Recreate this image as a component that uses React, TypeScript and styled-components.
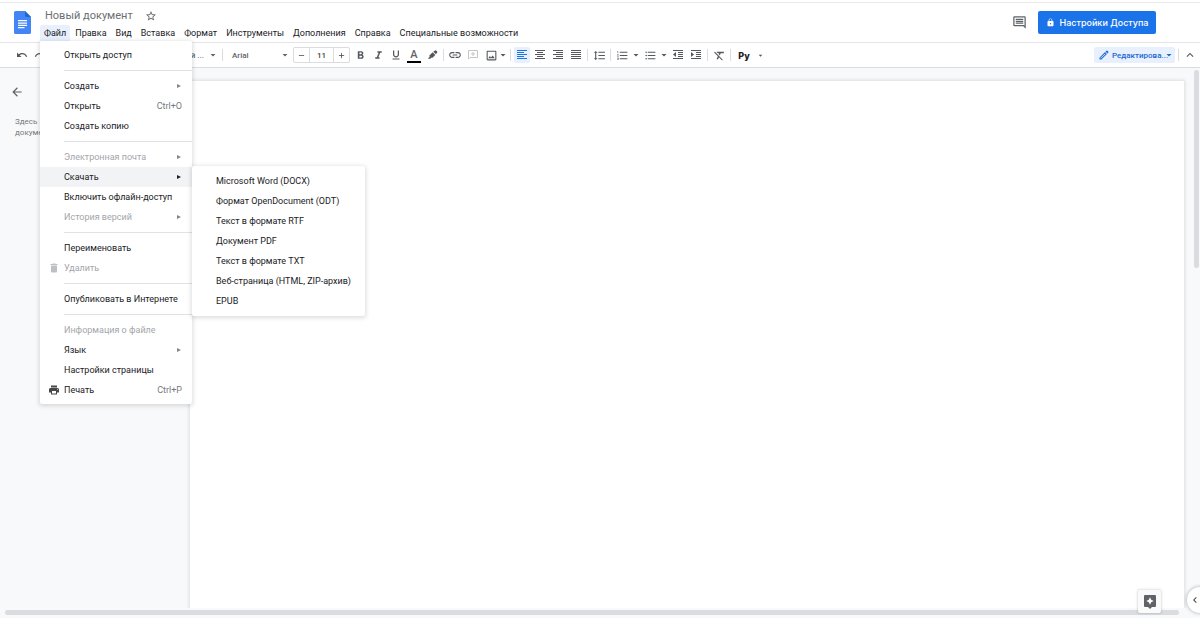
import React from "react";
import styled, { createGlobalStyle, css } from "styled-components";
import {
  MdUndo, MdRedo, MdPrint, MdSpellcheck, MdFormatPaint, MdFormatBold, MdFormatItalic, MdFormatUnderlined,
  MdInsertLink, MdOutlineImage, MdFormatLineSpacing, MdFormatListNumbered,
  MdFormatListBulleted, MdFormatClear,
  MdArrowDropDown, MdKeyboardArrowUp, MdKeyboardArrowLeft, MdArrowBack, MdDelete,
  MdStarBorder, MdOutlineComment, MdLock, MdOutlineEdit, MdAdd, MdRemove,
} from "react-icons/md";

const GlobalStyle = createGlobalStyle`
  * { box-sizing: border-box; }
  html, body, #root { height: 100%; }
  body { margin: 0; font-family: Roboto, "Liberation Sans", sans-serif; font-size: 9px; color: #202124; background: #fff; overflow: hidden; }
  button, input, select { font: inherit; color: inherit; margin: 0; padding: 0; border: 0; background: none; }
  button { cursor: pointer; }
  ul { list-style: none; margin: 0; padding: 0; }
  svg { display: block; flex: none; }
`;

const Shell = styled.div`
  display: flex;
  flex-direction: column;
  height: 100vh;
  padding-top: 2px;
`;

const Header = styled.header`
  display: flex;
  align-items: flex-start;
  height: 41px;
  padding: 8px 44px 0 14px;
  border-top: 1px solid #e8eaed;
  border-bottom: 1px solid #e3e5e8;
`;

const Logo = styled.a`
  display: block;
  width: 17px;
`;

const Titles = styled.div`
  flex: 1;
  padding-left: 9px;
  margin-top: -4px;
`;

const TitleRow = styled.div`
  display: flex;
  align-items: center;
  gap: 12px;
  height: 18px;
  padding-left: 5px;
`;

const Title = styled.h1`
  margin: 0;
  font-size: 11px;
  font-weight: 400;
  line-height: 18px;
  color: #6b6f74;
`;

const PlainButton = styled.button`
  display: flex;
  align-items: center;
  justify-content: center;
  color: #5f6368;
`;

const MenuBar = styled.ul`
  display: flex;
  gap: 1px;
`;

const MenuBarItem = styled.li`
  position: relative;
`;

const MenuBarButton = styled.button<{ $open?: boolean }>`
  height: 16px;
  padding: 0 4px;
  border-radius: 2px 2px 0 0;
  line-height: 16px;
  white-space: nowrap;
  background: ${(p) => (p.$open ? "#e8f0fe" : "transparent")};
`;

const panel = css`
  position: absolute;
  z-index: 5;
  background: #fff;
  border-radius: 2px;
  box-shadow: 0 1px 4px 1px rgba(60, 64, 67, 0.18);
`;

const FileMenu = styled.ul`
  ${panel}
  top: 16px;
  left: 0;
  width: 152px;
  padding: 4px 0;
`;

const SubMenu = styled.ul`
  ${panel}
  top: -1px;
  left: 100%;
  width: 173px;
  padding: 5px 0;
`;

const MenuItem = styled.li`
  position: relative;
`;

const MenuButton = styled.button<{ $active?: boolean }>`
  display: grid;
  grid-template-columns: 24px 1fr auto;
  align-items: center;
  width: 100%;
  height: 20px;
  padding-right: 10px;
  text-align: left;
  white-space: nowrap;
  background: ${(p) => (p.$active ? "#f1f3f4" : "transparent")};
  &:disabled { color: #a3a6aa; }
`;

const MenuIcon = styled.span`
  display: flex;
  padding-left: 8px;
  color: #444746;
  ${MenuButton}:disabled & { color: #bdc1c6; }
`;

const Shortcut = styled.span`
  color: #757a80;
`;

const SubArrow = styled.span<{ $active?: boolean }>`
  width: 0;
  height: 0;
  margin-right: 1px;
  border: 2px solid transparent;
  border-left: 4px solid ${(p) => (p.$active ? "#202124" : "#80868b")};
  border-right: 0;
`;

const Separator = styled.li`
  height: 1px;
  margin: 5px 0 5px 24px;
  background: #e0e2e5;
`;

const Actions = styled.div`
  display: flex;
  align-items: center;
  gap: 11px;
`;

const ShareButton = styled.button`
  display: flex;
  align-items: center;
  justify-content: center;
  gap: 5px;
  width: 118px;
  height: 23px;
  border-radius: 2px;
  background: #1a73e8;
  color: #fff;
  font-family: Inter, sans-serif;
  font-size: 9px;
  font-weight: 500;
`;

const Toolbar = styled.div`
  display: flex;
  align-items: center;
  gap: 2px;
  height: 25px;
  padding: 0 2px 0 14px;
  border-bottom: 1px solid #dadce0;
  color: #5f6368;
`;

const ToolButton = styled.button<{ $active?: boolean; $narrow?: boolean }>`
  display: flex;
  flex: none;
  align-items: center;
  justify-content: center;
  width: ${(p) => (p.$narrow ? 8 : 16)}px;
  height: 16px;
  border-radius: 2px;
  color: ${(p) => (p.$active ? "#1a73e8" : "#54585d")};
  background: ${(p) => (p.$active ? "#e8f0fe" : "transparent")};
  &:disabled { color: #c4c7ca; }
`;

const SplitTool = styled.span`
  display: flex;
  flex: none;
`;

const Divider = styled.span`
  flex: none;
  width: 1px;
  height: 12px;
  margin: 0 1px;
  background: #dadce0;
`;

const SelectBox = styled.label<{ $width: number; $tinted?: boolean }>`
  display: flex;
  flex: none;
  align-items: center;
  width: ${(p) => p.$width}px;
  height: 16px;
  padding-left: 4px;
  border-radius: 2px;
  font-size: 8px;
  font-weight: 500;
  color: ${(p) => (p.$tinted ? "#1967d2" : "#5f6368")};
  background: ${(p) => (p.$tinted ? "#e8f0fe" : "transparent")};
`;

const Select = styled.select<{ $kind?: "mode" | "style" }>`
  appearance: none;
  flex: 1;
  min-width: 0;
  height: 16px;
  padding-left: ${(p) => (p.$kind === "style" ? 0 : 2)}px;
  padding-right: ${(p) => (p.$kind === "style" ? 3 : 0)}px;
  margin-right: ${(p) => (p.$kind === "mode" ? -6 : 0)}px;
  text-align: ${(p) => (p.$kind === "style" ? "right" : "left")};
  outline: 0;
`;

const Stepper = styled.div`
  display: flex;
  flex: none;
  width: 57px;
  height: 16px;
  border: 1px solid #dadce0;
  border-radius: 2px;
`;

const StepButton = styled(PlainButton)`
  width: 15px;
  color: #444746;
`;

const SizeInput = styled.input`
  flex: 1;
  min-width: 0;
  border: solid #dadce0;
  border-width: 0 1px;
  text-align: center;
  font-size: 8px;
  font-weight: 500;
  color: #444746;
`;

const TextColor = styled.span`
  width: 14px;
  height: 15px;
  border-bottom: 2px solid #000;
  font-size: 11px;
  font-weight: 500;
  line-height: 13px;
  color: #5f6368;
`;

const Extension = styled.button`
  width: 20px;
  font-family: Inter, sans-serif;
  font-size: 9px;
  font-weight: 800;
  color: #202124;
`;

const Grow = styled.span`
  flex: 1;
`;

const Workspace = styled.div`
  display: flex;
  flex: 1;
  min-height: 0;
  background: #f8f9fa;
`;

const Outline = styled.aside`
  flex: none;
  width: 190px;
  padding: 17px 10px;
  color: #757a80;
`;

const OutlineHint = styled.p`
  width: 30px;
  margin: 17px 0 0 5px;
  font-size: 8px;
  line-height: 11px;
`;

const Sheet = styled.main`
  flex: 1;
  margin: 13px 10px 0 0;
  background: #fff;
  box-shadow: 0 0 3px 1px rgba(60, 64, 67, 0.15);
  clip-path: inset(-4px -4px 0 -4px);
`;

const VerticalScroll = styled.div`
  flex: none;
  width: 5px;
  height: 198px;
  margin: 2px 1px 0 0;
  border-radius: 3px;
  background: #dadce0;
`;

const BottomBar = styled.footer`
  flex: none;
  height: 10px;
  padding: 2px 21px 0 5px;
  background: #f8f9fa;
`;

const HorizontalScroll = styled.div`
  height: 5px;
  border-radius: 3px;
  background: #dadce0;
`;

const ExploreButton = styled.button`
  position: fixed;
  right: 39px;
  bottom: 5px;
  display: flex;
  align-items: center;
  justify-content: center;
  width: 23px;
  height: 23px;
  border-radius: 2px;
  background: #fafafa;
  box-shadow: 0 0 2px 1px rgba(60, 64, 67, 0.15);
`;

const SidePanelButton = styled.button`
  position: fixed;
  right: -13px;
  bottom: 5px;
  display: flex;
  align-items: center;
  width: 26px;
  height: 26px;
  padding-left: 2px;
  border-radius: 50%;
  background: #fff;
  color: #444746;
  box-shadow: 0 0 3px 1px rgba(60, 64, 67, 0.25);
`;

const DocsLogo = () => (
  <svg width="17" height="23" viewBox="0 0 17 23" aria-hidden="true">
    <path d="M1.6 0H11l6 6v15.4a1.6 1.6 0 0 1-1.6 1.6H1.6A1.6 1.6 0 0 1 0 21.400V1.600A1.600 1.600 0 0 1 1.600 0z" fill="#4285f4" />
    <path d="M11 0l6 6h-4.500A1.500 1.500 0 0 1 11 4.500z" fill="#1967d2" />
    <path d="M4 9h9v1.300H4zM4 11.400h9v1.300H4zM4 13.700h9V15H4zM4 16h6.500v1.300H4z" fill="#fff" />
  </svg>
);

const HighlighterIcon = () => (
  <svg width="11" height="11" viewBox="0 0 11 11" fill="currentColor" aria-hidden="true">
    <path d="M6.300 1.700 8 .4a.8.8 0 0 1 1 0l1.200 1.200a.8.8 0 0 1 0 1L8.900 4.300z" />
    <path d="M5.700 2.300 8.300 4.900 5.800 7.400a1 1 0 0 1-1.300.1L3.300 8.700H.8l1.900-2a1 1 0 0 1 .2-1.600z" />
  </svg>
);

const AddCommentIcon = () => (
  <svg width="10" height="10" viewBox="0 0 10 10" fill="none" stroke="currentColor" aria-hidden="true">
    <path d="M.5 9V.5h9v7H2z" />
    <path d="M5 2v4M3 4h4" />
  </svg>
);

const ExploreIcon = () => (
  <svg width="12" height="14" viewBox="0 0 12 14" aria-hidden="true">
    <path d="M1 0h10a1 1 0 0 1 1 1v10a1 1 0 0 1-1 1H8l-2 2-2-2H1a1 1 0 0 1-1-1V1a1 1 0 0 1 1-1z" fill="#5f6368" />
    <path d="M6 2.300 7.200 4.800 9.700 6 7.200 7.200 6 9.700 4.800 7.200 2.300 6 4.800 4.800z" fill="#fff" />
  </svg>
);

/* Five one-pixel text lines; each pair is the start and length of a line. */
const LinesIcon = ({ lines, arrow }: { lines: [number, number][]; arrow?: string }) => (
  <svg width="10" height="10" viewBox="0 0 10 10" fill="currentColor" aria-hidden="true">
    {lines.map(([x, w], i) => (
      <rect key={i} x={x} y={i * 2} width={w} height="1" shapeRendering="crispEdges" />
    ))}
    {arrow && <path d={arrow} />}
  </svg>
);

const alignLeft: [number, number][] = [[0, 10], [0, 7], [0, 10], [0, 7], [0, 10]];
const alignCenter: [number, number][] = [[0, 10], [2, 6], [0, 10], [2, 6], [0, 10]];
const alignRight: [number, number][] = [[0, 10], [3, 7], [0, 10], [3, 7], [0, 10]];
const alignJustify: [number, number][] = [[0, 10], [0, 10], [0, 10], [0, 10], [0, 10]];
const indentLines: [number, number][] = [[0, 10], [5, 5], [5, 5], [5, 5], [0, 10]];

type Entry = {
  label: string;
  disabled?: boolean;
  arrow?: boolean;
  shortcut?: string;
  icon?: React.ReactNode;
  children?: string[];
};

const fileGroups: Entry[][] = [
  [{ label: "Открыть доступ" }],
  [{ label: "Создать", arrow: true }, { label: "Открыть", shortcut: "Ctrl+O" }, { label: "Создать копию" }],
  [
    { label: "Электронная почта", disabled: true, arrow: true },
    {
      label: "Скачать",
      arrow: true,
      children: [
        "Microsoft Word (DOCX)",
        "Формат OpenDocument (ODT)",
        "Текст в формате RTF",
        "Документ PDF",
        "Текст в формате TXT",
        "Веб-страница (HTML, ZIP-архив)",
        "EPUB",
      ],
    },
    { label: "Включить офлайн-доступ" },
    { label: "История версий", disabled: true, arrow: true },
  ],
  [{ label: "Переименовать" }, { label: "Удалить", disabled: true, icon: <MdDelete size={12} /> }],
  [{ label: "Опубликовать в Интернете" }],
  [
    { label: "Информация о файле", disabled: true },
    { label: "Язык", arrow: true },
    { label: "Настройки страницы" },
    { label: "Печать", shortcut: "Ctrl+P", icon: <MdPrint size={12} /> },
  ],
];

const menus = ["Правка", "Вид", "Вставка", "Формат", "Инструменты", "Дополнения", "Справка", "Специальные возможности"];

const MenuEntry = ({ entry }: { entry: Entry }) => (
  <MenuItem>
    <MenuButton disabled={entry.disabled} $active={!!entry.children}>
      <MenuIcon>{entry.icon}</MenuIcon>
      <span>{entry.label}</span>
      {entry.arrow && <SubArrow $active={!!entry.children} />}
      {entry.shortcut && <Shortcut>{entry.shortcut}</Shortcut>}
    </MenuButton>
    {entry.children && (
      <SubMenu>
        {entry.children.map((label) => (
          <MenuEntry key={label} entry={{ label }} />
        ))}
      </SubMenu>
    )}
  </MenuItem>
);

const Tool = ({ label, icon, ...rest }: { label: string; icon: React.ReactNode; $active?: boolean; $narrow?: boolean; disabled?: boolean }) => (
  <ToolButton aria-label={label} {...rest}>{icon}</ToolButton>
);

const Drop = ({ label }: { label: string }) => <Tool label={label} $narrow icon={<MdArrowDropDown size={12} />} />;

export default function App() {
  return (
    <Shell>
      <GlobalStyle />
      <Header>
        <Logo href="#" aria-label="Документы"><DocsLogo /></Logo>
        <Titles>
          <TitleRow>
            <Title>Новый документ</Title>
            <PlainButton aria-label="Пометить"><MdStarBorder size={12} /></PlainButton>
          </TitleRow>
          <MenuBar>
            <MenuBarItem>
              <MenuBarButton $open>Файл</MenuBarButton>
              <FileMenu>
                {fileGroups.map((group, i) => (
                  <React.Fragment key={i}>
                    {i > 0 && <Separator role="separator" />}
                    {group.map((entry) => <MenuEntry key={entry.label} entry={entry} />)}
                  </React.Fragment>
                ))}
              </FileMenu>
            </MenuBarItem>
            {menus.map((name) => (
              <MenuBarItem key={name}><MenuBarButton>{name}</MenuBarButton></MenuBarItem>
            ))}
          </MenuBar>
        </Titles>
        <Actions>
          <PlainButton aria-label="Комментарии"><MdOutlineComment size={15} /></PlainButton>
          <ShareButton><MdLock size={9} />Настройки Доступа</ShareButton>
        </Actions>
      </Header>

      <Toolbar>
        <Tool label="Отменить" icon={<MdUndo size={12} />} />
        <Tool label="Повторить" icon={<MdRedo size={12} />} />
        <Tool label="Печать" icon={<MdPrint size={12} />} />
        <Tool label="Правописание" icon={<MdSpellcheck size={12} />} />
        <Tool label="Копировать форматирование" icon={<MdFormatPaint size={12} />} />
        <Divider />
        <SelectBox $width={110}>
          <Select aria-label="Стиль" $kind="style"><option>Обычный ...</option></Select>
          <MdArrowDropDown size={12} />
        </SelectBox>
        <Divider />
        <SelectBox $width={65}>
          <Select aria-label="Шрифт"><option>Arial</option></Select>
          <MdArrowDropDown size={12} />
        </SelectBox>
        <Stepper>
          <StepButton aria-label="Уменьшить"><MdRemove size={9} /></StepButton>
          <SizeInput aria-label="Размер шрифта" defaultValue="11" />
          <StepButton aria-label="Увеличить"><MdAdd size={9} /></StepButton>
        </Stepper>
        <Tool label="Полужирный" icon={<MdFormatBold size={13} />} />
        <Tool label="Курсив" icon={<MdFormatItalic size={13} />} />
        <Tool label="Подчеркнутый" icon={<MdFormatUnderlined size={12} />} />
        <Tool label="Цвет текста" icon={<TextColor>A</TextColor>} />
        <Tool label="Цвет выделения" icon={<HighlighterIcon />} />
        <Divider />
        <Tool label="Ссылка" icon={<MdInsertLink size={14} />} />
        <Tool label="Добавить комментарий" disabled icon={<AddCommentIcon />} />
        <SplitTool>
          <Tool label="Изображение" icon={<MdOutlineImage size={13} />} />
          <Drop label="Вставить изображение" />
        </SplitTool>
        <Divider />
        <Tool label="По левому краю" $active icon={<LinesIcon lines={alignLeft} />} />
        <Tool label="По центру" icon={<LinesIcon lines={alignCenter} />} />
        <Tool label="По правому краю" icon={<LinesIcon lines={alignRight} />} />
        <Tool label="По ширине" icon={<LinesIcon lines={alignJustify} />} />
        <Divider />
        <Tool label="Интервал" icon={<MdFormatLineSpacing size={13} />} />
        <Divider />
        <Tool label="Нумерованный список" icon={<MdFormatListNumbered size={13} />} />
        <Drop label="Виды нумерации" />
        <Tool label="Маркированный список" icon={<MdFormatListBulleted size={13} />} />
        <Drop label="Виды маркеров" />
        <Tool label="Уменьшить отступ" icon={<LinesIcon lines={indentLines} arrow="M3 2v5L0 4.500z" />} />
        <Tool label="Увеличить отступ" icon={<LinesIcon lines={indentLines} arrow="M0 2v5l3-2.500z" />} />
        <Divider />
        <Tool label="Очистить форматирование" icon={<MdFormatClear size={13} />} />
        <Divider />
        <Extension>Ру</Extension>
        <Tool label="Язык ввода" $narrow icon={<MdArrowDropDown size={9} />} />
        <Grow />
        <SelectBox $width={81} $tinted>
          <MdOutlineEdit size={12} />
          <Select aria-label="Режим" $kind="mode"><option>Редактирова...</option></Select>
          <MdArrowDropDown size={12} />
        </SelectBox>
        <Divider />
        <Tool label="Скрыть меню" icon={<MdKeyboardArrowUp size={14} />} />
      </Toolbar>

      <Workspace>
        <Outline>
          <PlainButton aria-label="Закрыть структуру"><MdArrowBack size={14} /></PlainButton>
          <OutlineHint>Здесь докуме</OutlineHint>
        </Outline>
        <Sheet aria-label="Страница документа" />
        <VerticalScroll />
      </Workspace>
      <BottomBar><HorizontalScroll /></BottomBar>

      <ExploreButton aria-label="Анализ данных"><ExploreIcon /></ExploreButton>
      <SidePanelButton aria-label="Показать боковую панель"><MdKeyboardArrowLeft size={12} /></SidePanelButton>
    </Shell>
  );
}
